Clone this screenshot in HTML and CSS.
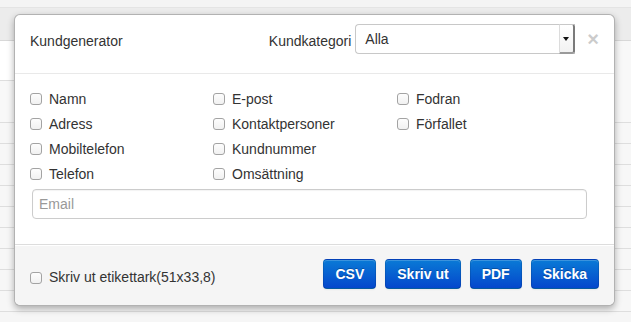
FILE: index.html
```html
<!DOCTYPE html>
<html lang="sv">
<head>
<meta charset="utf-8">
<title>Kundgenerator</title>
<link rel="stylesheet" href="styles.css">
</head>
<body>
<div class="page">
  <div class="topbar"></div>
  <div class="toolbar"></div>
  <div class="row row-first"><div class="row-split"></div></div>
  <div class="row"></div>
  <div class="row"></div>
  <div class="row"></div>
  <div class="row"></div>
  <div class="row"></div>
  <div class="row"></div>
  <div class="row"></div>
  <div class="row"></div>
  <div class="row"></div>
</div>

<div class="modal">
  <div class="modal-header">
    <h3 class="title">Kundgenerator</h3>
    <label class="cat-label">Kundkategori</label>
    <div class="select"><span class="select-value">Alla</span><span class="select-arrow"><span class="caret"></span></span></div>
    <button class="close" type="button">×</button>
  </div>
  <div class="modal-body">
    <div class="fields">
      <label class="check"><span class="box"></span>Namn</label>
      <label class="check"><span class="box"></span>E-post</label>
      <label class="check"><span class="box"></span>Fodran</label>
      <label class="check"><span class="box"></span>Adress</label>
      <label class="check"><span class="box"></span>Kontaktpersoner</label>
      <label class="check"><span class="box"></span>Förfallet</label>
      <label class="check"><span class="box"></span>Mobiltelefon</label>
      <label class="check"><span class="box"></span>Kundnummer</label>
      <span class="empty"></span>
      <label class="check"><span class="box"></span>Telefon</label>
      <label class="check"><span class="box"></span>Omsättning</label>
    </div>
    <input class="email" type="text" placeholder="Email">
  </div>
  <div class="modal-footer">
    <label class="check footer-check"><span class="box"></span>Skriv ut etikettark(51x33,8)</label>
    <div class="actions">
      <button class="btn" type="button">CSV</button>
      <button class="btn" type="button">Skriv ut</button>
      <button class="btn" type="button">PDF</button>
      <button class="btn" type="button">Skicka</button>
    </div>
  </div>
</div>
</body>
</html>
```

FILE: styles.css
```css
* { box-sizing: border-box; }

html, body {
  margin: 0;
  padding: 0;
}

body {
  width: 631px;
  height: 322px;
  overflow: hidden;
  background: #f6f6f6;
  font-family: "Liberation Sans", Arial, sans-serif;
  font-size: 14px;
  line-height: 20px;
  color: #333;
  position: relative;
}

/* background page */
.page {
  display: flex;
  flex-direction: column;
}
.topbar {
  height: 8px;
  background: #f4f4f4;
  border-bottom: 1px solid #e4e4e4;
}
.toolbar {
  height: 33px;
  background: #ececec;
  border-bottom: 1px solid #d8d8d8;
}
.row {
  height: 21px;
  background: #f7f7f7;
  border-bottom: 1px solid #dedede;
}
.row-first {
  height: 82px;
  background: #f8f8f8;
}
.row-split {
  width: 14px;
  height: 40px;
  background: #ffffff;
  border-bottom: 1px solid #dedede;
}

/* modal */
.modal {
  position: absolute;
  left: 14px;
  top: 14px;
  width: 601px;
  background: #fff;
  border: 1px solid rgba(0, 0, 0, 0.3);
  border-radius: 6px;
  box-shadow: 0 3px 7px rgba(0, 0, 0, 0.3);
}

.modal-header {
  display: flex;
  align-items: flex-start;
  padding: 9px 15px;
  border-bottom: 1px solid #e9e9e9;
}
.title {
  flex: 1;
  margin: 0;
  padding-top: 7px;
  font-size: 14px;
  font-weight: normal;
  line-height: 20px;
  color: #333;
}
.cat-label {
  padding-top: 7px;
  margin-right: 4px;
  color: #333;
}
.select {
  display: flex;
  width: 220px;
  height: 30px;
  margin-bottom: 10px;
  background: #fff;
  border: 1px solid #c8c8c8;
  border-right: none;
  border-radius: 4px 0 0 4px;
}
.select-value {
  flex: 1;
  padding: 4px 0 0 9px;
  color: #333;
}
.select-arrow {
  width: 16px;
  height: 30px;
  margin-top: -1px;
  display: flex;
  align-items: center;
  justify-content: center;
  background: linear-gradient(#ffffff, #f2f2f2);
  border-left: 1px solid #dcdcdc;
  border-right: 2px solid #7a7a7a;
  border-bottom: 2px solid #9a9a9a;
  border-top: 1px solid #c8c8c8;
  border-radius: 0 3px 3px 0;
  padding-right: 1px;
}
.caret {
  width: 0;
  height: 0;
  border-left: 3px solid transparent;
  border-right: 3px solid transparent;
  border-top: 4px solid #111;
}
.close {
  margin-left: 12px;
  padding: 5px 0 0;
  background: none;
  border: none;
  font-family: "Liberation Sans", Arial, sans-serif;
  font-size: 20px;
  font-weight: bold;
  line-height: 20px;
  color: #000;
  opacity: 0.2;
}

.modal-body {
  padding: 12px 15px 25px;
}
.fields {
  display: grid;
  grid-template-columns: 183px 184px auto;
  grid-auto-rows: 25px;
}
.check {
  display: flex;
  align-items: center;
  color: #333;
  font-size: 14px;
}
.box {
  width: 12px;
  height: 12px;
  margin-right: 7px;
  margin-top: 1px;
  border: 1px solid #a3a3a3;
  border-radius: 3px;
  background: linear-gradient(#fdfdfd, #f1f1f1);
}
.email {
  display: block;
  width: 555px;
  height: 30px;
  margin: 3px 0 0 2px;
  padding: 4px 6px;
  border: 1px solid #cccccc;
  border-radius: 4px;
  font-family: "Liberation Sans", Arial, sans-serif;
  font-size: 14px;
  color: #555;
  box-shadow: inset 0 1px 1px rgba(0, 0, 0, 0.05);
}
.email::placeholder {
  color: #999;
}

.modal-footer {
  display: flex;
  align-items: center;
  justify-content: space-between;
  padding: 14px 15px 16px;
  background: #f5f5f5;
  border-top: 1px solid #dddddd;
  border-radius: 0 0 6px 6px;
  box-shadow: inset 0 1px 0 #fff;
}
.footer-check {
  padding-top: 6px;
}
.actions {
  display: flex;
  gap: 9px;
}
.btn {
  height: 30px;
  padding: 4px 11px;
  font-family: "Liberation Sans", Arial, sans-serif;
  font-size: 14px;
  font-weight: bold;
  line-height: 20px;
  color: #fff;
  text-shadow: 0 -1px 0 rgba(0, 0, 0, 0.25);
  background: linear-gradient(#0a7ad6, #0447cc);
  border: 1px solid rgba(0, 0, 0, 0.1);
  border-bottom-color: rgba(0, 0, 0, 0.25);
  border-radius: 4px;
  box-shadow: inset 0 1px 0 rgba(255, 255, 255, 0.2), 0 1px 2px rgba(0, 0, 0, 0.05);
}
```
